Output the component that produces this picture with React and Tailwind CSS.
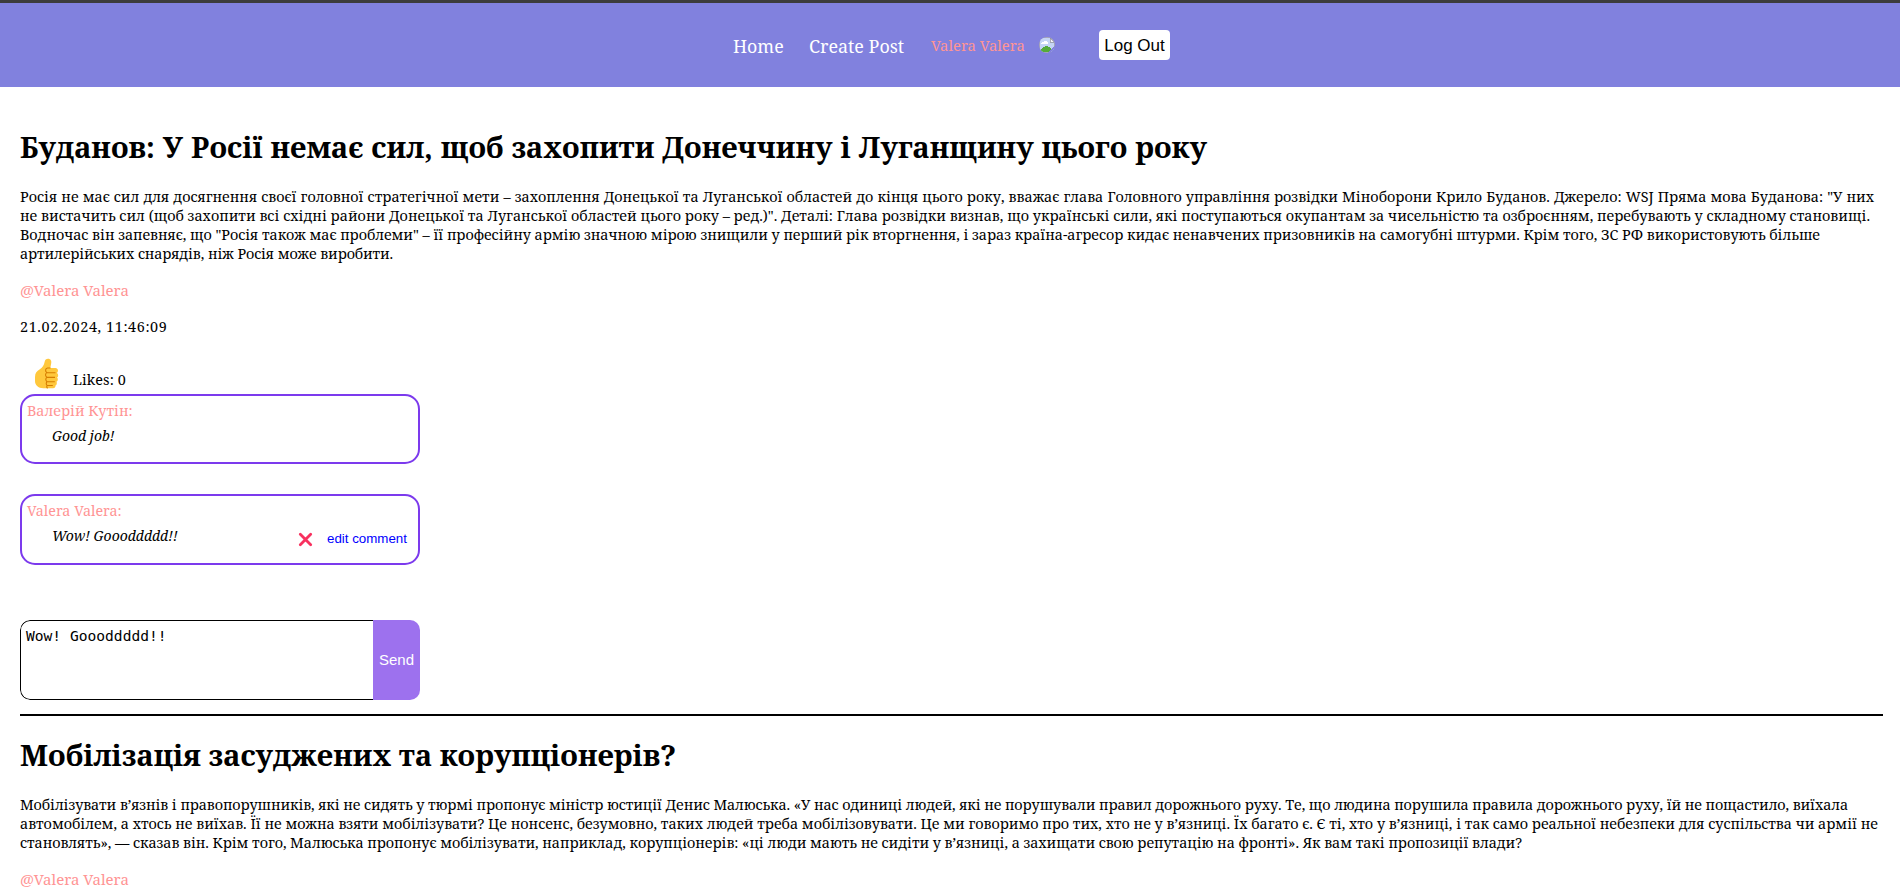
const serif = "font-['Noto_Serif','DejaVu_Serif_Condensed',serif]";
const sans = "font-['Liberation_Sans',Arial,sans-serif]";

function BrokenImage() {
  return (
    <svg className="ml-[15px] mt-[34px] size-4 rounded-full" viewBox="0 0 16 16" shapeRendering="crispEdges">
      <path d="M0 0h11l5 5v11H0z" fill="#a9a9b5" />
      <path d="M1 1h10v4h4v10H1z" fill="#c5d5f5" />
      <path d="M3 5h2V4h3v1h1v2H2V6h1z" fill="#fff" />
      <path d="M11 1l4 4h-4z" fill="#f4f4fa" stroke="#8d8d96" strokeWidth=".7" />
      <path d="M1 15v-2l3-3 3-1 3 1 2 2v3z" fill="#55ab3a" />
      <path d="M16 8.500L9 16h2l5-5z" fill="#8181de" />
      <path d="M12 15l3-3v3z" fill="#5d9c50" />
    </svg>
  );
}

function ThumbsUp() {
  return (
    <svg className="ml-[14px] h-[31px] w-[25px]" viewBox="0 0 25 31">
      <path
        d="M1 19c0-4 2-6 4.500-7.500C8.500 9.700 10 7 10.600 4 11 1.700 12.200.7 14 .7c2.800 0 3.700 2.200 3.200 4.600L16.300 10h5.200c2.800.2 3.200 3.500 1.500 4.900 1.600 1.200 1.500 3.700.1 4.600 1.200 1.300 1 3.500-.6 4.200.8 1.300.2 3.300-1 3.900.2 1.700-.8 2.500-2.500 2.600H9.500C4 30.200 1 27 1 23z"
        fill="#ffc83d"
      />
      <path
        d="M16.500 10h-3c-2.300.3-2.500 3.600-.7 4.600-1.800 1.200-1.600 3.800.1 4.700-1.500 1.100-1.500 3.500.2 4.400-1.200 1-1.100 3 .1 3.800-.8.900-.5 2.100.4 2.700M13 14.700h8.500M13 19.400h8M13.200 23.800h7.600M13.300 27.500h5.500"
        fill="none"
        stroke="#d67d00"
        strokeWidth="1.100"
      />
    </svg>
  );
}

function Line({ className, children }) {
  return (
    <span className={`block whitespace-nowrap text-justify [text-align-last:justify] ${className}`}>{children}</span>
  );
}

function Author() {
  return <p className="mt-[18px] h-[19px] text-[15px] leading-[19px] text-[#ff9494]">@Valera Valera</p>;
}

function Comment({ author, text, className, children }) {
  return (
    <div className={`flex w-[400px] justify-between rounded-[15px] border-2 border-[#7c3aed] pl-[5px] ${className}`}>
      <div>
        <p className="mt-[5px] text-[14.300px] leading-[19px] text-[#ff9494]">{author}</p>
        <p className="ml-[25px] mt-[6px] text-[14px] italic leading-[19px]">{text}</p>
      </div>
      {children}
    </div>
  );
}

export default function App() {
  return (
    <div className={`h-[896px] overflow-hidden bg-white text-black ${serif}`}>
      <header className="flex h-[87px] items-start border-t-[3px] border-[#3c3c3c] bg-[#8181de] pl-[733px] text-white">
        <span className="mt-[31px] w-[76px] whitespace-nowrap text-[17.800px] leading-6">Home</span>
        <span className="mt-[31px] w-[122px] whitespace-nowrap text-[17.900px] leading-6">Create Post</span>
        <span className="mt-[30px] w-[93px] whitespace-nowrap text-[14.800px] leading-6 text-[#ff9494]">Valera Valera</span>
        <BrokenImage />
        <button className={`ml-[44px] mt-[27px] h-[30px] w-[71px] whitespace-nowrap rounded-[4px] bg-white text-[17px] leading-[27px] text-black ${sans}`}>
          Log Out
        </button>
      </header>

      <main className="pl-5 pr-[17px]">
        <article className="pt-[41px]">
          <h1 className="text-[29px] font-bold leading-[38px]">
            <Line className="w-[1187px]">Буданов: У Росії немає сил, щоб захопити Донеччину і Луганщину цього року</Line>
          </h1>
          <p className="mt-[21px] text-[14.350px] leading-[19px]">
            <Line className="w-[1854px]">
              Росія не має сил для досягнення своєї головної стратегічної мети – захоплення Донецької та Луганської областей до кінця цього року, вважає глава Головного управління розвідки Міноборони Крило Буданов. Джерело: WSJ Пряма мова Буданова: "У них
            </Line>
            <Line className="w-[1850px]">
              не вистачить сил (щоб захопити всі східні райони Донецької та Луганської областей цього року – ред.)". Деталі: Глава розвідки визнав, що українські сили, які поступаються окупантам за чисельністю та озброєнням, перебувають у складному становищі.
            </Line>
            <Line className="w-[1800px] tracking-[-0.045px]">
              Водночас він запевняє, що "Росія також має проблеми" – її професійну армію значною мірою знищили у перший рік вторгнення, і зараз країна-агресор кидає ненавчених призовників на самогубні штурми. Крім того, ЗС РФ використовують більше
            </Line>
            <Line className="w-[373px] tracking-[-0.14px]">артилерійських снарядів, ніж Росія може виробити.</Line>
          </p>
          <Author />
          <p className="mt-[17px] text-[14.400px] leading-[19px] tracking-[0.6px]">21.02.2024, 11:46:09</p>
          <div className="flex h-[58px] pt-[22px]">
            <ThumbsUp />
            <span className="ml-[14px] mt-[12px] text-[14.400px] leading-[19px] tracking-[0.15px]">Likes: 0</span>
          </div>

          <Comment author="Валерій Кутін:" text="Good job!" className="h-[70px]" />
          <Comment author="Valera Valera:" text="Wow! Goooddddd!!" className="mt-[30px] h-[71px]">
            <div className={`mr-[11px] mt-[34px] flex items-start text-[13.330px] leading-[18px] text-[#0000ff] ${sans}`}>
              <svg className="mr-[14px] mt-[2px] size-[15px]" viewBox="0 0 15 15">
                <path d="M2.300 2.300l10.400 10.400M12.700 2.300l-10.400 10.400" stroke="#f8315f" strokeWidth="2.800" strokeLinecap="round" />
              </svg>
              edit comment
            </div>
          </Comment>

          <div className="mt-[55px] flex h-20 w-[400px] overflow-hidden rounded-[10px]">
            <div className="flex-1 whitespace-nowrap rounded-l-[10px] border border-r-0 border-black pl-[5px] pt-[5px] font-['DejaVu_Sans_Mono',monospace] text-[14.600px] leading-[19px]">
              Wow! Goooddddd!!
            </div>
            <button className={`w-[47px] bg-[#9d71ee] text-[15px] leading-[22px] text-white ${sans}`}>Send</button>
          </div>
          <hr className="mt-[14px] border-t-2 border-black" />
        </article>

        <article className="pt-[20px]">
          <h1 className="text-[29px] font-bold leading-[38px]">
            <Line className="w-[654px]">Мобілізація засуджених та корупціонерів?</Line>
          </h1>
          <p className="mt-[21px] text-[14.350px] leading-[19px]">
            <Line className="w-[1828px] tracking-[-0.1px]">
              Мобілізувати в’язнів і правопорушників, які не сидять у тюрмі пропонує міністр юстиції Денис Малюська. «У нас одиниці людей, які не порушували правил дорожнього руху. Те, що людина порушила правила дорожнього руху, їй не пощастило, виїхала
            </Line>
            <Line className="w-[1858px] tracking-[-0.03px]">
              автомобілем, а хтось не виїхав. Її не можна взяти мобілізувати? Це нонсенс, безумовно, таких людей треба мобілізовувати. Це ми говоримо про тих, хто не у в’язниці. Їх багато є. Є ті, хто у в’язниці, і так само реальної небезпеки для суспільства чи армії не
            </Line>
            <Line className="w-[1502px] tracking-[-0.05px]">
              становлять», — сказав він. Крім того, Малюська пропонує мобілізувати, наприклад, корупціонерів: «ці люди мають не сидіти у в’язниці, а захищати свою репутацію на фронті». Як вам такі пропозиції влади?
            </Line>
          </p>
          <Author />
        </article>
      </main>
    </div>
  );
}
